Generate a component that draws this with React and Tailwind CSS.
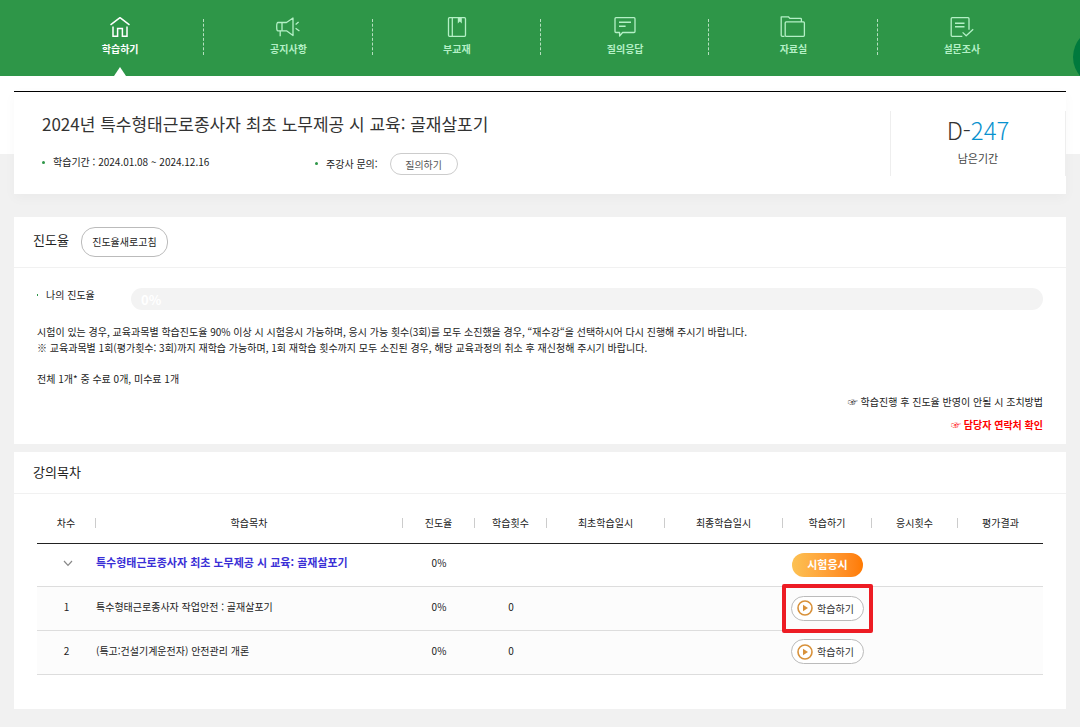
import React from "react";

const stroke = {
  fill: "none",
  stroke: "currentColor",
  strokeWidth: 1.3,
  strokeLinejoin: "round",
};

function HomeIcon() {
  return (
    <svg width="20" height="22" viewBox="0 0 20 22" aria-hidden="true" {...stroke} strokeWidth="1.5">
      <path d="M0.5 8.8 10 1.7 19.5 8.8" />
      <path d="M3 10.5V20.3H7.6V12.6H12.4V20.3H17V10.5" strokeLinejoin="miter" />
    </svg>
  );
}

function MegaphoneIcon() {
  return (
    <svg width="24" height="22" viewBox="0 0 24 22" aria-hidden="true" {...stroke}>
      <path d="M2 6.5H10.5L17 2V19.5L10.5 14.8H2C1.1 14.8 0.7 14 0.7 10.6S1.1 6.5 2 6.5Z" />
      <path d="M6 6.5V14.8M4.2 14.8V20.3" />
      <path d="M19.6 8.4 22.6 6M19.6 12.2 23.4 15" />
    </svg>
  );
}

function BookIcon() {
  return (
    <svg width="20" height="22" viewBox="0 0 20 22" aria-hidden="true" {...stroke}>
      <rect x="1.5" y="1.7" width="17" height="18.6" rx="1" />
      <path d="M5.3 1.7V20.3" />
      <path d="M10.8 1.7V7.4L12.8 5.4 14.8 7.4V1.7Z" fill="currentColor" stroke="none" />
    </svg>
  );
}

function ChatIcon() {
  return (
    <svg width="22" height="22" viewBox="0 0 22 22" aria-hidden="true" {...stroke}>
      <path d="M2 1.7H20Q21 1.7 21 2.7V15.5Q21 16.5 20 16.5H8.6L5.6 20V16.5H2Q1 16.5 1 15.5V2.7Q1 1.7 2 1.7Z" />
      <path d="M5 6.3H17M5 10.2H11.6" strokeWidth="1.5" />
    </svg>
  );
}

function FolderIcon() {
  return (
    <svg width="26" height="22" viewBox="0 0 26 22" aria-hidden="true" {...stroke}>
      <path d="M4.5 20.3H2.4Q1.2 20.3 1.2 19.1V0.8H8.4L9.8 2.4H20.6Q21.4 2.4 21.4 3.2V5.9" />
      <rect x="5.2" y="5.9" width="19.2" height="14.4" rx="1" />
    </svg>
  );
}

function SurveyIcon() {
  return (
    <svg width="24" height="22" viewBox="0 0 24 22" aria-hidden="true" {...stroke}>
      <path d="M12.3 20.3H2.2Q1.2 20.3 1.2 19.3V2.7Q1.2 1.7 2.2 1.7H18Q19 1.7 19 2.7V13.8" />
      <path d="M5 7.2H14.5M5 10.8H14.5" strokeWidth="1.4" />
      <path d="M12.6 16.4 16.2 19.8 23.2 13.2" />
    </svg>
  );
}

function PlayIcon() {
  return (
    <svg width="16" height="16" viewBox="0 0 16 16" aria-hidden="true">
      <circle cx="8" cy="8" r="7" fill="none" stroke="#d8913a" strokeWidth="1.6" />
      <path d="M6 4.8 11 8 6 11.2Z" fill="#d8913a" />
    </svg>
  );
}

const menu = [
  { label: "학습하기", Icon: HomeIcon, active: true },
  { label: "공지사항", Icon: MegaphoneIcon },
  { label: "부교재", Icon: BookIcon },
  { label: "질의응답", Icon: ChatIcon },
  { label: "자료실", Icon: FolderIcon },
  { label: "설문조사", Icon: SurveyIcon },
];

const columns = [
  { label: "차수", width: "w-[59px]" },
  { label: "학습목차", width: "" },
  { label: "진도율", width: "w-[72px]" },
  { label: "학습횟수", width: "w-[72px]" },
  { label: "최초학습일시", width: "w-[118px]" },
  { label: "최종학습일시", width: "w-[118px]" },
  { label: "학습하기", width: "w-[89px]" },
  { label: "응시횟수", width: "w-[86px]" },
  { label: "평가결과", width: "w-[85px]" },
];

const lessons = [
  { no: 1, title: "특수형태근로종사자 작업안전 : 골재살포기", progress: "0%", count: 0, marked: true },
  { no: 2, title: "(특고:건설기계운전자) 안전관리 개론", progress: "0%", count: 0 },
];

function Nav() {
  return (
    <header className="relative h-[76px] overflow-hidden bg-[#2e9648] pr-[34px] pl-9">
      <nav className="h-full">
        <ul className="flex h-full">
          {menu.map(({ label, Icon, active }, i) => (
            <li key={label} className="relative flex-1">
              <a
                href="#"
                className={
                  "flex h-full flex-col items-center gap-1 pt-4 text-[10px] leading-[14px] font-bold " +
                  (active ? "text-white" : "text-[#b4f0c6]")
                }
              >
                <Icon />
                {label}
              </a>
              {i < menu.length - 1 && (
                <span className="absolute top-[19px] right-0 h-9 border-r border-dashed border-[#b4dfbe]" />
              )}
              {active && (
                <svg className="absolute bottom-0 left-1/2 -translate-x-1/2" width="12" height="9" viewBox="0 0 12 9" aria-hidden="true">
                  <path d="M6 0 12 9H0Z" fill="#fff" />
                </svg>
              )}
            </li>
          ))}
        </ul>
      </nav>
      <span className="absolute top-7 -right-[51px] size-[58px] rounded-full bg-[#007a3d]" />
    </header>
  );
}

function CourseCard() {
  return (
    <section className="flex items-start border-t border-black bg-white pt-[19px] pb-[18px] shadow-[0_4px_12px_rgba(0,0,0,0.03)]">
      <div className="min-w-0 flex-1 pl-7">
        <h1 className="text-[17px] leading-[26px] text-[#333]">2024년 특수형태근로종사자 최초 노무제공 시 교육: 골재살포기</h1>
        <div className="mt-4 flex items-center">
          <p className="flex w-[273px] items-center gap-2 pb-1 leading-4">
            <span className="size-[3px] rounded-full bg-[#2e9648]" />
            학습기간 : 2024.01.08 ~ 2024.12.16
          </p>
          <p className="flex items-center gap-2 pb-0.5">
            <span className="size-[3px] rounded-full bg-[#2e9648]" />
            주강사 문의:
          </p>
          <button type="button" className="ml-3 h-[22px] w-[68px] rounded-full border border-[#ccc] bg-white text-[#555]">
            질의하기
          </button>
        </div>
      </div>
      <div className="flex h-[65px] w-44 flex-col items-center border-x border-[#eee] pt-[3px]">
        <p className="text-2xl leading-8 font-light text-[#333]">
          D-<span className="text-[#0891ce]">247</span>
        </p>
        <p className="mt-1 text-[11px] leading-4 text-[#444]">남은기간</p>
      </div>
    </section>
  );
}

function ProgressCard() {
  return (
    <section className="mt-[23px] bg-white pb-[11px]">
      <div className="flex h-[51px] items-center gap-3 border-b border-[#f1f1f1] pl-[19px]">
        <h2 className="pb-1 text-[13px]">진도율</h2>
        <button type="button" className="h-[30px] w-[87px] rounded-[14px] border border-[#bbb] bg-white pb-0.5">
          진도율새로고침
        </button>
      </div>
      <div className="px-[23px] pt-[19px]">
        <div className="flex items-center">
          <p className="flex w-[94px] items-center gap-2 pb-2">
            <span className="h-0.5 w-px bg-[#2e9648]" />
            나의 진도율
          </p>
          <div className="h-[22px] flex-1 rounded-full bg-[#f3f3f3] pl-[10px] text-[13px] leading-6 font-bold text-white">0%</div>
        </div>
        <p className="mt-[14px] leading-4">
          시험이 있는 경우, 교육과목별 학습진도율 90% 이상 시 시험응시 가능하며, 응시 가능 횟수(3회)를 모두 소진했을 경우, “재수강“을 선택하시어 다시 진행해 주시기 바랍니다.
        </p>
        <p className="leading-4">
          ※ 교육과목별 1회(평가횟수: 3회)까지 재학습 가능하며, 1회 재학습 횟수까지 모두 소진된 경우, 해당 교육과정의 취소 후 재신청해 주시기 바랍니다.
        </p>
        <p className="mt-[15px] leading-4">전체 1개* 중 수료 0개, 미수료 1개</p>
        <div className="mt-[7px] flex flex-col items-end gap-[7px] leading-4">
          <a href="#">☞ 학습진행 후 진도율 반영이 안될 시 조치방법</a>
          <a href="#" className="font-bold text-[#f00]">
            ☞ 담당자 연락처 확인
          </a>
        </div>
      </div>
    </section>
  );
}

function LessonTable() {
  return (
    <section className="mt-2 bg-white pb-[34px]">
      <h2 className="flex h-[42px] items-center border-b border-[#f1f1f1] pb-0.5 pl-[19px] text-[13px]">강의목차</h2>
      <div className="px-[23px] pt-[9px]">
        <table className="w-full table-fixed border-collapse text-center">
          <thead>
            <tr className="h-10 border-b border-[#222]">
              {columns.map(({ label, width }, i) => (
                <th key={label} scope="col" className={"p-0 font-normal " + width}>
                  <span className={"flex h-[10px] items-center justify-center " + (i < columns.length - 1 ? "border-r border-[#ccc]" : "")}>
                    {label}
                  </span>
                </th>
              ))}
            </tr>
          </thead>
          <tbody>
            <tr className="h-[43px] border-b border-[#ddd]">
              <td className="p-0 pb-1.5">
                <button type="button" aria-label="목차 접기" className="ml-[3px] inline-flex align-middle">
                  <svg width="10" height="7" viewBox="0 0 10 7" aria-hidden="true">
                    <path d="M1 1 5 5.4 9 1" fill="none" stroke="#888" strokeWidth="1.2" />
                  </svg>
                </button>
              </td>
              <td className="p-0 pb-1 text-left text-[11px] font-bold text-[#3a2fd6]">특수형태근로종사자 최초 노무제공 시 교육: 골재살포기</td>
              <td className="p-0 pb-1">0%</td>
              <td />
              <td />
              <td />
              <td className="p-0">
                <button
                  type="button"
                  className="h-6 w-[71px] rounded-full bg-linear-to-r from-[#fcc153] to-[#ff7a00] align-middle text-[11px] font-bold text-white"
                >
                  시험응시
                </button>
              </td>
              <td />
              <td />
            </tr>
            {lessons.map((lesson) => {
              const line = lesson.marked ? "" : " border-b border-[#ddd]";
              return (
                <tr key={lesson.no} className="h-11 bg-[#fcfcfc]">
                  <td className="border-b border-[#ddd] p-0 pb-1">{lesson.no}</td>
                  <td className="border-b border-[#ddd] p-0 pb-1 text-left">{lesson.title}</td>
                  <td className="border-b border-[#ddd] p-0 pb-1">{lesson.progress}</td>
                  <td className="border-b border-[#ddd] p-0 pb-1">{lesson.count}</td>
                  <td className="border-b border-[#ddd]" />
                  <td className="border-b border-[#ddd]" />
                  <td className={"relative p-0" + line}>
                    {lesson.marked && (
                      <span className="pointer-events-none absolute -top-[3px] -right-px -left-px h-[49px] rounded-xs border-4 border-[#ed1c24]" />
                    )}
                    <button
                      type="button"
                      className="inline-flex h-[25px] w-[73px] items-center justify-center gap-1 rounded-full border border-[#bbb] bg-white pr-1 align-middle text-[#333]"
                    >
                      <PlayIcon />
                      학습하기
                    </button>
                  </td>
                  <td className={"p-0" + line} />
                  <td className={"p-0" + line} />
                </tr>
              );
            })}
          </tbody>
        </table>
      </div>
    </section>
  );
}

export default function App() {
  return (
    <div
      lang="ko"
      className="min-h-screen bg-[#f1f1f1] font-['Noto_Sans_CJK_KR','Noto_Sans',sans-serif] text-[10px] text-[#222]"
    >
      <Nav />
      <main className="bg-[linear-gradient(#fff_78px,#f1f1f1_78px)] px-[14px] pt-[15px] pb-[18px]">
        <CourseCard />
        <ProgressCard />
        <LessonTable />
      </main>
    </div>
  );
}
